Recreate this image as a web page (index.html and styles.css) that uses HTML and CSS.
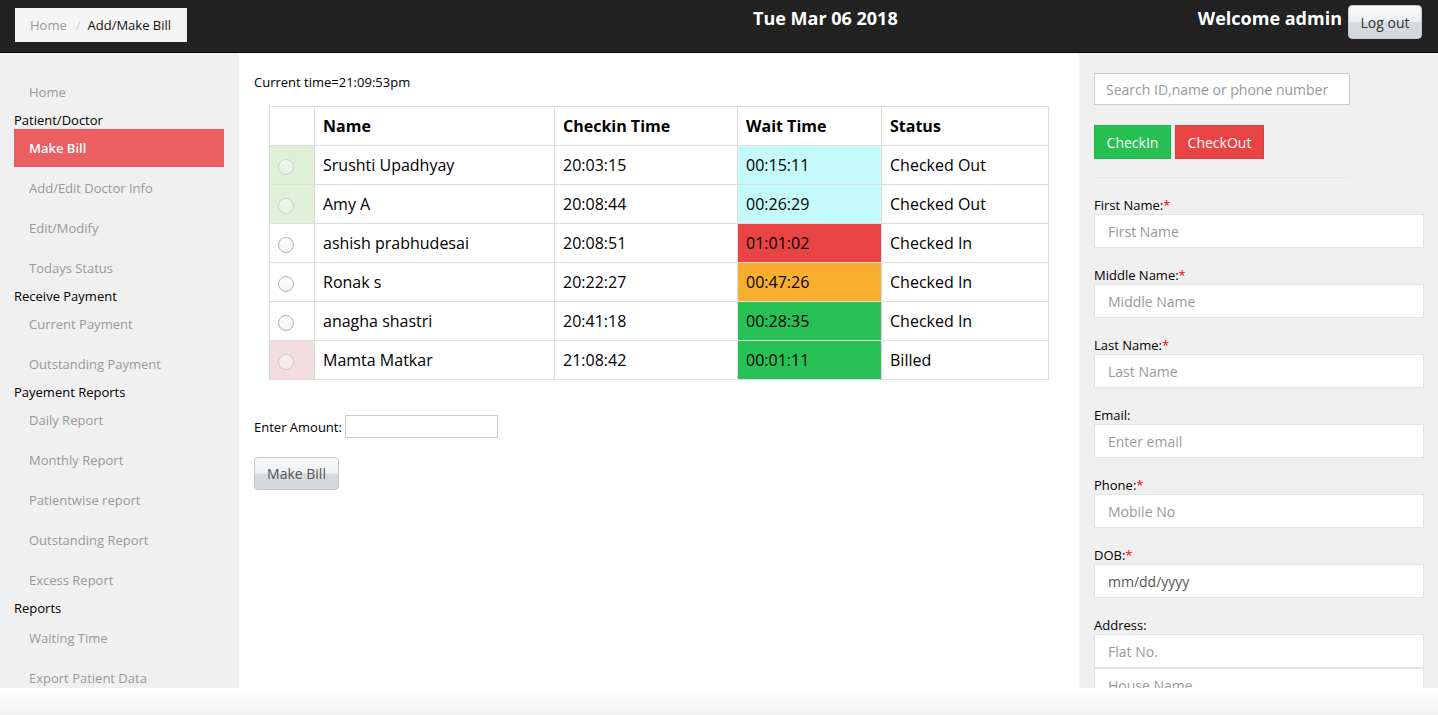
FILE: index.html
```html
<!DOCTYPE html>
<html>
<head>
<meta charset="utf-8">
<link rel="stylesheet" href="styles.css">
</head>
<body>
<div class="page">
  <header class="topbar">
    <div class="top-left">
      <ol class="breadcrumb">
        <li class="crumb-link">Home</li>
        <li class="crumb-sep">/</li>
        <li class="crumb-active">Add/Make Bill</li>
      </ol>
    </div>
    <div class="top-date">Tue Mar 06 2018</div>
    <div class="top-right">
      <span class="welcome">Welcome admin</span>
      <button class="btn-gloss logout">Log out</button>
    </div>
  </header>

  <div class="body-row">
    <nav class="sidebar">
      <a class="nav-link">Home</a>
      <div class="nav-head">Patient/Doctor</div>
      <a class="nav-link active">Make Bill</a>
      <a class="nav-link">Add/Edit Doctor Info</a>
      <a class="nav-link">Edit/Modify</a>
      <a class="nav-link">Todays Status</a>
      <div class="nav-head">Receive Payment</div>
      <a class="nav-link">Current Payment</a>
      <a class="nav-link">Outstanding Payment</a>
      <div class="nav-head">Payement Reports</div>
      <a class="nav-link">Daily Report</a>
      <a class="nav-link">Monthly Report</a>
      <a class="nav-link">Patientwise report</a>
      <a class="nav-link">Outstanding Report</a>
      <a class="nav-link">Excess Report</a>
      <div class="nav-head nav-head-last">Reports</div>
      <a class="nav-link">Waiting Time</a>
      <a class="nav-link">Export Patient Data</a>
    </nav>

    <main class="content">
      <div class="cur-time">Current time=21:09:53pm</div>
      <div class="table-wrap">
        <table class="ptable">
          <colgroup>
            <col class="c-sel"><col class="c-name"><col class="c-in"><col class="c-wait"><col class="c-status">
          </colgroup>
          <thead>
            <tr><th></th><th>Name</th><th>Checkin Time</th><th>Wait Time</th><th>Status</th></tr>
          </thead>
          <tbody>
            <tr>
              <td class="sel sel-out"><input type="radio" name="p" class="radio dim" disabled></td>
              <td>Srushti Upadhyay</td><td>20:03:15</td><td class="w-cyan">00:15:11</td><td>Checked Out</td>
            </tr>
            <tr>
              <td class="sel sel-out"><input type="radio" name="p" class="radio dim" disabled></td>
              <td>Amy A</td><td>20:08:44</td><td class="w-cyan">00:26:29</td><td>Checked Out</td>
            </tr>
            <tr>
              <td class="sel"><input type="radio" name="p" class="radio"></td>
              <td>ashish prabhudesai</td><td>20:08:51</td><td class="w-red">01:01:02</td><td>Checked In</td>
            </tr>
            <tr>
              <td class="sel"><input type="radio" name="p" class="radio"></td>
              <td>Ronak s</td><td>20:22:27</td><td class="w-orange">00:47:26</td><td>Checked In</td>
            </tr>
            <tr>
              <td class="sel"><input type="radio" name="p" class="radio"></td>
              <td>anagha shastri</td><td>20:41:18</td><td class="w-green">00:28:35</td><td>Checked In</td>
            </tr>
            <tr>
              <td class="sel sel-billed"><input type="radio" name="p" class="radio dim" disabled></td>
              <td>Mamta Matkar</td><td>21:08:42</td><td class="w-green">00:01:11</td><td>Billed</td>
            </tr>
          </tbody>
        </table>
      </div>
      <div class="amount-row">
        <label class="amount-label">Enter Amount:</label>
        <input type="text" class="amount-input">
      </div>
      <button class="btn-gloss make-bill">Make Bill</button>
    </main>

    <aside class="panel">
      <input type="text" class="search" placeholder="Search ID,name or phone number">
      <div class="action-row">
        <button class="btn-act btn-in">CheckIn</button>
        <button class="btn-act btn-out">CheckOut</button>
      </div>
      <hr class="divider">
      <div class="field">
        <label class="flabel">First Name:<span class="req">*</span></label>
        <input type="text" class="finput" placeholder="First Name">
      </div>
      <div class="field">
        <label class="flabel">Middle Name:<span class="req">*</span></label>
        <input type="text" class="finput" placeholder="Middle Name">
      </div>
      <div class="field">
        <label class="flabel">Last Name:<span class="req">*</span></label>
        <input type="text" class="finput" placeholder="Last Name">
      </div>
      <div class="field">
        <label class="flabel">Email:</label>
        <input type="text" class="finput" placeholder="Enter email">
      </div>
      <div class="field">
        <label class="flabel">Phone:<span class="req">*</span></label>
        <input type="text" class="finput" placeholder="Mobile No">
      </div>
      <div class="field">
        <label class="flabel">DOB:<span class="req">*</span></label>
        <input type="text" class="finput date-like" value="mm/dd/yyyy" readonly>
      </div>
      <div class="field">
        <label class="flabel">Address:</label>
        <input type="text" class="finput" placeholder="Flat No.">
        <input type="text" class="finput stacked" placeholder="House Name">
      </div>
    </aside>
  </div>
  <div class="bottom-band"></div>
</div>
</body>
</html>
```

FILE: styles.css
```css
* { box-sizing: border-box; }
html, body { margin: 0; padding: 0; }
body {
  font-family: "Open Sans", "DejaVu Sans", sans-serif;
  color: #000;
  background: #fff;
}
.page {
  width: 1438px;
  height: 715px;
  overflow: hidden;
  display: flex;
  flex-direction: column;
}

/* ---------- top bar ---------- */
.topbar {
  height: 53px;
  flex: none;
  background: #222;
  border-bottom: 1px solid #080808;
  display: flex;
  align-items: flex-start;
}
.top-left {
  width: 753px;
  padding: 8px 0 0 15px;
}
.breadcrumb {
  list-style: none;
  margin: 0;
  display: inline-flex;
  align-items: center;
  height: 34px;
  width: 172px;
  padding: 0 0 0 15px;
  background: #f5f5f5;
  font-size: 13px;
  white-space: nowrap;
}
.crumb-link { color: #999; }
.crumb-sep { color: #ccc; padding: 0 7px 0 9px; }
.crumb-active { color: #111; }
.top-date {
  color: #fff;
  font-weight: 700;
  font-size: 18px;
  line-height: 24px;
  padding-top: 6px;
}
.top-right {
  margin-left: auto;
  display: flex;
  align-items: flex-start;
  padding-right: 16px;
}
.welcome {
  color: #fff;
  font-weight: 700;
  font-size: 18px;
  line-height: 24px;
  padding-top: 6px;
  margin-right: 6px;
}
.btn-gloss {
  font-family: "Open Sans", "DejaVu Sans", sans-serif;
  border: 1px solid #c5c9cd;
  border-radius: 4px;
  background: linear-gradient(to bottom, #f8f9fa 0%, #eef0f2 48%, #d6dbe0 52%, #d3d8dd 100%);
  cursor: pointer;
  padding: 0;
}
.logout {
  margin-top: 5px;
  width: 74px;
  height: 34px;
  font-size: 14px;
  color: #333;
}

/* ---------- body ---------- */
.body-row {
  flex: none;
  height: 635px;
  display: flex;
  overflow: hidden;
}

/* sidebar */
.sidebar {
  width: 239px;
  flex: none;
  background: #f0f0f0;
  padding: 20px 15px 0 14px;
  display: flex;
  flex-direction: column;
}
.nav-link {
  display: block;
  flex: none;
  height: 38px;
  line-height: 38px;
  margin-bottom: 2px;
  padding-left: 15px;
  font-size: 13px;
  color: #999;
  white-space: nowrap;
}
.nav-link.active {
  background: #eb5e62;
  color: #fff;
  font-weight: 600;
}
.nav-head {
  flex: none;
  height: 16px;
  line-height: 14px;
  padding-bottom: 2px;
  font-size: 13px;
  color: #000;
  white-space: nowrap;
}
.nav-head-last {
  margin-bottom: 2px;
}

/* main content */
.content {
  width: 840px;
  flex: none;
  background: #fff;
  padding: 20px 15px 0 15px;
}
.cur-time {
  font-size: 13px;
  line-height: 18px;
}
.table-wrap {
  padding: 0 15px;
  margin-top: 15px;
}
.ptable {
  width: 779px;
  border-collapse: collapse;
  table-layout: fixed;
  border: 1px solid #ddd;
  font-size: 16px;
}
.c-sel { width: 45px; }
.c-name { width: 240px; }
.c-in { width: 183px; }
.c-wait { width: 144px; }
.c-status { width: 167px; }
.ptable th, .ptable td {
  border: 1px solid #ddd;
  padding: 8px 8px;
  line-height: 22px;
  height: 39px;
  text-align: left;
  white-space: nowrap;
}
.ptable th { font-weight: 700; }
.ptable td.sel { padding: 0 0 0 8px; vertical-align: middle; }
.sel-out { background: #dff0d8; }
.sel-billed { background: #f2dede; }
.w-cyan { background: #c4fafa; }
.w-red { background: #e84444; }
.w-orange { background: #f8ae2e; }
.w-green { background: #28c156; }

.radio {
  -webkit-appearance: none;
  appearance: none;
  width: 16px;
  height: 16px;
  margin: 4px 0 0 0;
  border: 1px solid #b3b3b3;
  border-radius: 50%;
  background: linear-gradient(to bottom, #fff, #f3f3f3);
  display: block;
}
.radio.dim {
  opacity: 0.5;
}

.amount-row {
  margin-top: 35px;
  display: flex;
  align-items: center;
  gap: 3px;
}
.amount-label {
  font-size: 13px;
}
.amount-input {
  width: 153px;
  height: 23px;
  border: 1px solid #ccc;
  border-radius: 0;
  padding: 0 4px;
  font-family: inherit;
}
.make-bill {
  margin-top: 19px;
  width: 85px;
  height: 33px;
  font-size: 14px;
  color: #555;
}

/* right panel */
.panel {
  flex: 1;
  background: #f0f0f0;
  padding: 20px 15px 0 15px;
}
.search {
  display: block;
  width: 256px;
  height: 32px;
  border: 1px solid #ccc;
  background: #fff;
  padding: 0 11px;
  font-family: inherit;
  font-size: 14px;
  color: #333;
}
.search::placeholder, .finput::placeholder { color: #999; }
.action-row {
  display: flex;
  gap: 4px;
  margin-top: 20px;
}
.btn-act {
  height: 34px;
  border: 1px solid transparent;
  color: #fff;
  font-family: inherit;
  font-size: 14px;
  padding: 0;
  border-radius: 0;
}
.btn-in { width: 77px; background: #28bf53; border-color: #22b14b; }
.btn-out { width: 89px; background: #e84444; border-color: #e23d3d; }
.divider {
  width: 256px;
  margin: 18px 0 0 0;
  border: 0;
  border-top: 1px solid #e8e8e8;
  height: 0;
}
.field {
  margin-top: 18px;
}
.flabel {
  display: block;
  font-size: 13px;
  line-height: 18px;
}
.req { color: #f00; }
.finput {
  display: block;
  width: 330px;
  height: 34px;
  border: 1px solid #e3e3e3;
  background: #fff;
  padding: 0 13px;
  font-family: inherit;
  font-size: 14px;
  color: #555;
  border-radius: 0;
}
.finput.stacked { margin-top: 0; }
.date-like { padding-left: 13px; color: #555; }

.bottom-band {
  flex: 1;
  background: linear-gradient(to bottom, #ffffff 0%, #fafafa 40%, #f1f1f1 100%);
}
```
